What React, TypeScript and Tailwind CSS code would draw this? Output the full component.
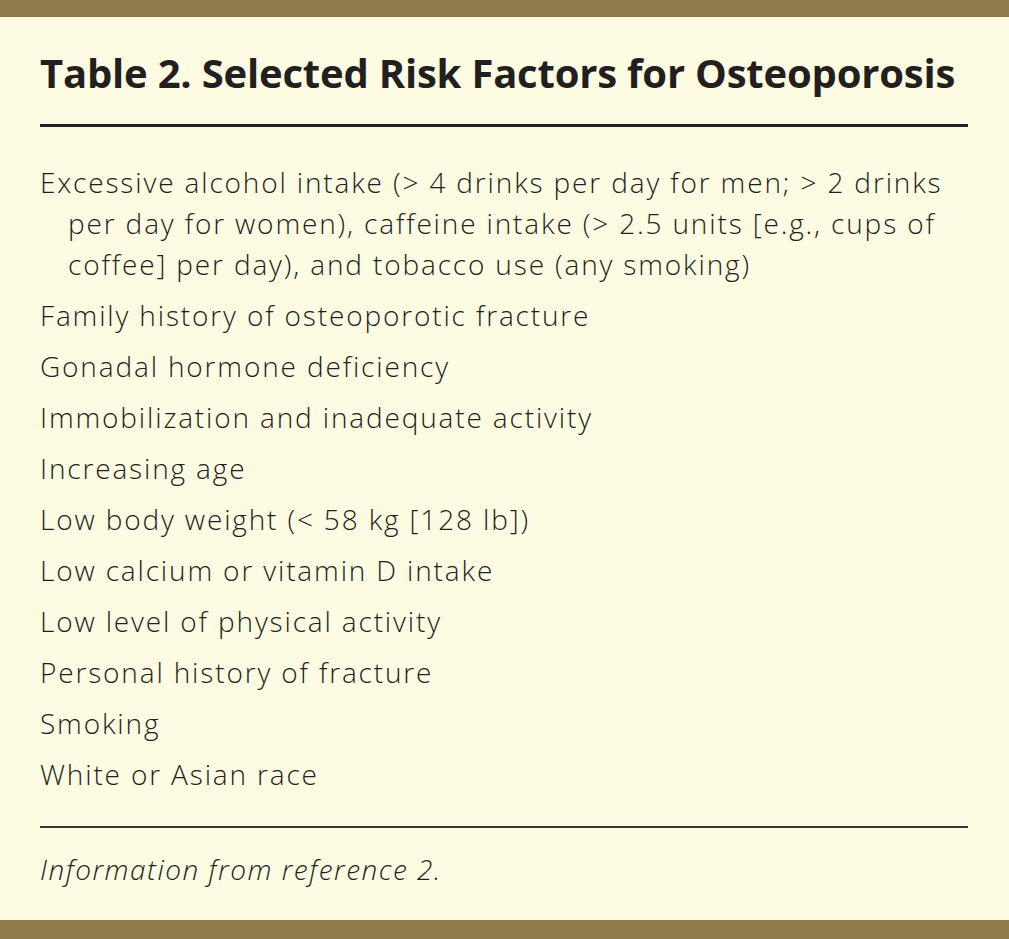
const items: string[] = [
  'Family history of osteoporotic fracture',
  'Gonadal hormone deficiency',
  'Immobilization and inadequate activity',
  'Increasing age',
  'Low body weight (< 58 kg [128 lb])',
  'Low calcium or vitamin D intake',
  'Low level of physical activity',
  'Personal history of fracture',
  'Smoking',
  'White or Asian race',
];

export default function App() {
  return (
    <div className="w-[1009px] h-[939px] bg-[#fdfce3] flex flex-col text-[#231f20] font-['Open_Sans',sans-serif]">
      <div className="h-[17px] bg-[#8f7a4a] shrink-0" />
      <div className="flex-1 pl-[40px] pr-[41px]">
        <h1 className="mt-[31px] text-[40px] leading-[50px] font-bold tracking-[-0.2px] whitespace-nowrap">
          Table 2. Selected Risk Factors for Osteoporosis
        </h1>
        <div className="mt-[26px] border-t-[3px] border-[#231f20]" />

        <ul className="mt-[35px] flex flex-col gap-[10px] text-[28px] leading-[41px] font-[350] tracking-[1.85px]">
          <li className="pl-[28px] -indent-[28px]">
            Excessive alcohol intake (&gt; 4 drinks per day for men; &gt; 2 drinks
            <br />
            per day for women), caffeine intake (&gt; 2.5 units [e.g., cups of
            <br />
            coffee] per day), and tobacco use (any smoking)
          </li>
          {items.map((t) => (
            <li key={t} className="pl-[28px] -indent-[28px]">
              {t}
            </li>
          ))}
        </ul>

        <div className="mt-[31px] border-t-2 border-[#3b3838]" />
        <p className="mt-[21px] text-[28px] leading-[41px] font-[350] italic tracking-[1.5px]">
          Information from reference 2.
        </p>
      </div>
      <div className="h-[19px] bg-[#8f7a4a] shrink-0" />
    </div>
  );
}
